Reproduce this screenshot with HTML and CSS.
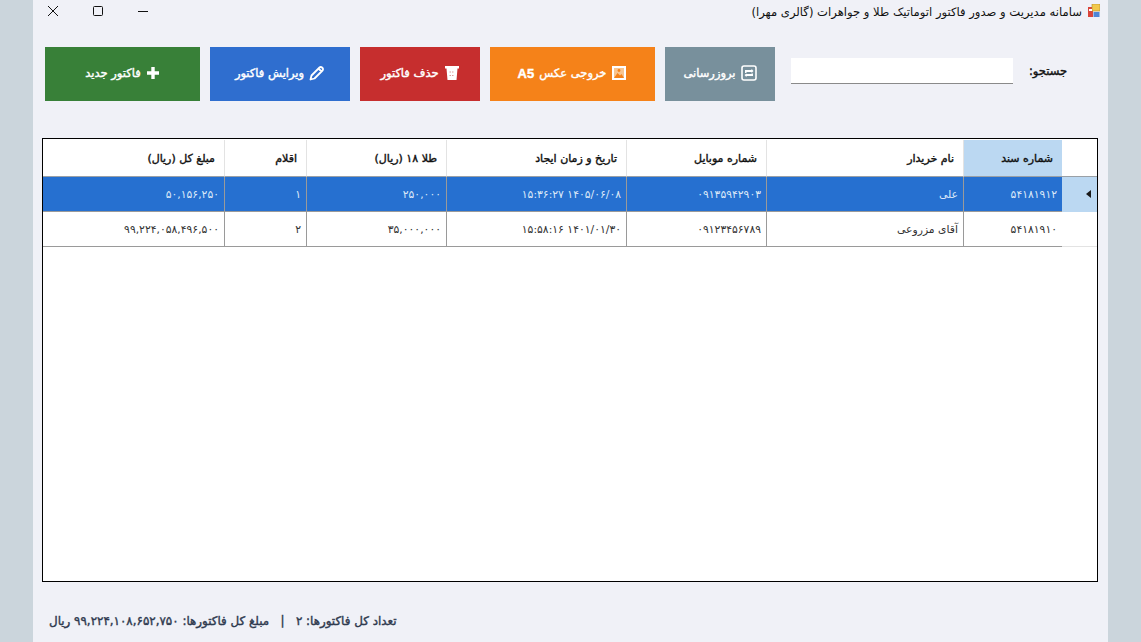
FILE: index.html
```html
<!DOCTYPE html>
<html lang="fa" dir="rtl">
<head>
<meta charset="utf-8">
<title>سامانه مدیریت و صدور فاکتور</title>
<link rel="stylesheet" href="styles.css">
</head>
<body>
<div class="window">
  <header class="titlebar">
    <svg class="app-icon" viewBox="0 0 12 13" width="12" height="13"><rect x="0" y="3" width="5" height="10" fill="#d9453b"/><rect x="4" y="0" width="8" height="7" fill="#f2c94c" stroke="#b08a2a" stroke-width=".6"/><rect x="5.5" y="8" width="6" height="5" fill="#4f86d6"/><rect x="1" y="5" width="3" height="2" fill="#fff"/></svg>
    <span class="title">سامانه مدیریت و صدور فاکتور اتوماتیک طلا و جواهرات (گالری مهرا)</span>
    <div class="controls">
      <svg viewBox="0 0 10 10" width="10" height="10"><path d="M0 5.5H10" stroke="#111" stroke-width="1"/></svg>
      <svg viewBox="0 0 10 10" width="10" height="10"><rect x=".5" y=".5" width="9" height="9" rx="1" fill="none" stroke="#111" stroke-width="1"/></svg>
      <svg viewBox="0 0 10 10" width="10" height="10"><path d="M0 0L10 10M10 0L0 10" stroke="#111" stroke-width="1" fill="none"/></svg>
    </div>
  </header>

  <div class="toolbar">
    <label class="search-label">جستجو:</label>
    <input class="search" type="text">
    <button class="btn btn-gray"><svg viewBox="0 0 16 16" width="16" height="16"><rect x="1" y="1" width="14" height="14" rx="2" fill="none" stroke="#fff" stroke-width="1.6"/><path d="M4 5H10.5V3.8L12.5 6L10.5 8V7H5.5V8H4ZM12 11H5.5V12.2L3.5 10L5.5 8.5V9H10.5V8.5H12Z" fill="#fff"/></svg>بروزرسانی</button>
    <button class="btn btn-orange"><svg viewBox="0 0 16 16" width="16" height="16"><rect x="1" y="1" width="14" height="14" fill="#fff"/><rect x="3" y="3" width="10" height="10" fill="#f9c58f"/><path d="M3 13L6.5 8L9 10.5L10.5 9L13 13Z" fill="#f58219"/><circle cx="8" cy="5.5" r="1.4" fill="#f58219"/></svg>خروجی عکس <b class="latin">A5</b></button>
    <button class="btn btn-red"><svg viewBox="0 0 16 16" width="16" height="16"><path d="M1 1H15V3.5H13.5L12.5 15H3.5L2.5 3.5H1Z" fill="#fff"/><path d="M5.5 7H10.5M5.5 10.5H10.5" stroke="#dc9a9a" stroke-width="1" stroke-dasharray="1.5 1"/></svg>حذف فاکتور</button>
    <button class="btn btn-blue"><svg viewBox="0 0 16 16" width="16" height="16"><path d="M1.5 14.5L2.5 10.5L10.5 2.5C11.2 1.8 12.3 1.8 13 2.5L13.5 3C14.2 3.7 14.2 4.8 13.5 5.5L5.5 13.5ZM9.5 3.5L12.5 6.5" fill="none" stroke="#fff" stroke-width="1.8" stroke-linejoin="round"/></svg>ویرایش فاکتور</button>
    <button class="btn btn-green"><svg viewBox="0 0 14 14" width="14" height="14"><path d="M7 1V13M1 7H13" stroke="#fff" stroke-width="3.4"/></svg>فاکتور جدید</button>
  </div>

  <div class="grid-box">
    <table class="grid">
      <colgroup>
        <col class="c0"><col class="c1"><col class="c2"><col class="c3"><col class="c4"><col class="c5"><col class="c6"><col class="c7">
      </colgroup>
      <thead>
        <tr>
          <th class="corner"></th>
          <th class="sorted">شماره سند</th>
          <th>نام خریدار</th>
          <th>شماره موبایل</th>
          <th>تاریخ و زمان ایجاد</th>
          <th>طلا ۱۸ (ریال)</th>
          <th>اقلام</th>
          <th>مبلغ کل (ریال)</th>
        </tr>
      </thead>
      <tbody>
        <tr class="selected">
          <td class="rowhead active"><span class="arrow"></span></td>
          <td>۵۴۱۸۱۹۱۲</td>
          <td>علی</td>
          <td>۰۹۱۳۵۹۴۲۹۰۳</td>
          <td>۱۴۰۵/۰۶/۰۸ ۱۵:۳۶:۲۷</td>
          <td>۲۵۰,۰۰۰</td>
          <td>۱</td>
          <td>۵۰,۱۵۶,۲۵۰</td>
        </tr>
        <tr>
          <td class="rowhead"></td>
          <td>۵۴۱۸۱۹۱۰</td>
          <td>آقای مزروعی</td>
          <td>۰۹۱۲۳۴۵۶۷۸۹</td>
          <td>۱۴۰۱/۰۱/۳۰ ۱۵:۵۸:۱۶</td>
          <td>۳۵,۰۰۰,۰۰۰</td>
          <td>۲</td>
          <td>۹۹,۲۲۴,۰۵۸,۴۹۶,۵۰۰</td>
        </tr>
      </tbody>
    </table>
  </div>

  <footer class="status">تعداد کل فاکتورها: ۲ &nbsp; | &nbsp; مبلغ کل فاکتورها: ۹۹,۲۲۴,۱۰۸,۶۵۲,۷۵۰ ریال</footer>
</div>
</body>
</html>
```
FILE: styles.css
```css
* { box-sizing: border-box; }
html, body { margin: 0; height: 100%; }
body {
  background: #cbd5dc;
  padding: 0 33px;
  font-family: "DejaVu Sans", "Noto Sans", sans-serif;
  overflow: hidden;
}
.window {
  height: 642px;
  background: #f0f1f7;
  display: flex;
  flex-direction: column;
}
.titlebar {
  height: 47px;
  flex: none;
  display: flex;
  align-items: flex-start;
  padding: 4px 8px 0 11px;
  gap: 6px;
}
.title { font-size: 11.6px; line-height: 16px; color: #111; }
.app-icon { flex: none; }
.controls {
  margin-right: auto;
  display: flex;
  gap: 35px;
  align-items: center;
  padding-left: 4px;
  height: 14px;
}
.toolbar {
  height: 54px;
  flex: none;
  display: flex;
  align-items: center;
  padding: 0 41px 0 12px;
}
.search-label {
  width: 38px;
  margin-left: 16px;
  margin-top: -6px;
  font-size: 11.5px;
  -webkit-text-stroke: .4px #111;
  color: #111;
  white-space: nowrap;
}
.search {
  width: 222px;
  height: 26px;
  margin-left: 16px;
  margin-top: -6px;
  border: 0;
  border-bottom: 1px solid #8a8a8a;
  background: #fff;
}
.btn {
  height: 54px;
  border: 0;
  padding: 0 0 2px;
  margin-left: 10px;
  color: #fff;
  font-family: inherit;
  font-size: 11.5px;
  -webkit-text-stroke: .4px #fff;
  display: flex;
  align-items: center;
  justify-content: center;
  gap: 5px;
  white-space: nowrap;
}
.btn svg { flex: none; }
.latin { font-family: "Liberation Sans", sans-serif; font-size: 13px; }
.btn-gray { width: 110px; background: #78909c; }
.btn-orange { width: 165px; background: #f58219; }
.btn-red { width: 120px; background: #c62e2e; }
.btn-blue { width: 140px; background: #2f6ecf; }
.btn-green { width: 155px; background: #388038; margin-left: 0; }
.grid-box {
  height: 444px;
  flex: none;
  margin: 37px 10px 0 9px;
  border: 1px solid #000;
  background: #fff;
  padding-top: 1px;
}
.grid {
  width: 1054px;
  table-layout: fixed;
  border-collapse: separate;
  border-spacing: 0;
}
.c0 { width: 35px; }
.c1 { width: 99px; }
.c2 { width: 197px; }
.c3 { width: 140px; }
.c4 { width: 180px; }
.c5 { width: 140px; }
.c6 { width: 82px; }
.c7 { width: 181px; }
th {
  height: 37px;
  padding: 0 9px 0 4px;
  text-align: right;
  font-size: 11px;
  font-weight: 400;
  -webkit-text-stroke: .4px #111;
  color: #111;
  background: #fff;
  border-left: 1px solid #e3e3e3;
  border-bottom: 1px solid #9aa0a6;
  white-space: nowrap;
}
th:last-child, td:last-child { border-left: 0; }
th.corner { border-left: 0; }
th.sorted { background: #bbd8f2; }
td {
  height: 35px;
  padding: 0 5px;
  text-align: right;
  font-size: 10.8px;
  color: #333;
  background: #fff;
  border-left: 1px solid #9a9a9a;
  border-bottom: 1px solid #9a9a9a;
  white-space: nowrap;
}
.selected td { background: #2670d0; color: #dbe8f8; }
td.rowhead { background: #fff; border-left: 0; border-bottom-color: #e3e3e3; padding: 0; }
.selected td.rowhead { background: #bbd8f2; border-bottom-color: #bbd8f2; }
.arrow {
  display: block;
  width: 0;
  height: 0;
  margin-right: 6px;
  border-style: solid;
  border-width: 4px 5px 4px 0;
  border-color: transparent #1a1a1a transparent transparent;
}
.status {
  margin-top: 31px;
  padding-left: 16px;
  text-align: left;
  font-size: 11.9px;
  line-height: 16px;
  -webkit-text-stroke: .4px #2f3a4f;
  color: #2f3a4f;
  white-space: nowrap;
}
```
